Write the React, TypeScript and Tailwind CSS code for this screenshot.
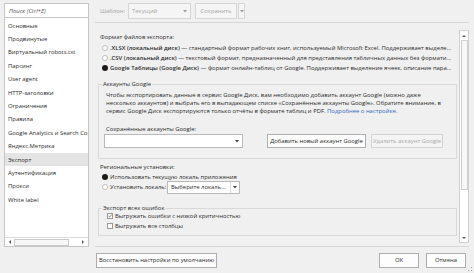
import React from 'react';

const sections = [
  'Основные',
  'Продвинутые',
  'Виртуальный robots.txt',
  'Парсинг',
  'User agent',
  'HTTP-заголовки',
  'Ограничения',
  'Правила',
  'Google Analytics и Search Console',
  'Яндекс.Метрика',
  'Экспорт',
  'Аутентификация',
  'Прокси',
  'White label',
];

function Radio({ checked }: { checked?: boolean }) {
  if (checked) {
    return <span className="w-[6px] h-[6px] rounded-full bg-[#1c1c1c] shrink-0" />;
  }
  return <span className="w-[6px] h-[6px] rounded-full border border-[#bdbdbd] bg-white shrink-0" />;
}

function Checkbox({ checked }: { checked?: boolean }) {
  return (
    <span className="w-[6px] h-[6px] border border-[#9a9a9a] bg-white shrink-0 flex items-center justify-center">
      {checked && (
        <svg width="6" height="6" viewBox="0 0 6 6" className="-mt-[1px]">
          <path d="M0.8 3.2 L2.3 4.6 L5.4 0.9" fill="none" stroke="#222" strokeWidth="0.9" />
        </svg>
      )}
    </span>
  );
}

function Caret({ color = '#444' }: { color?: string }) {
  return (
    <svg width="4" height="3" viewBox="0 0 4 3">
      <path d="M0 0 L4 0 L2 2.5 Z" fill={color} />
    </svg>
  );
}

function Arrow({ dir }: { dir: 'left' | 'right' | 'up' | 'down' }) {
  const d = {
    left: 'M3 0 L3 4 L1 2 Z',
    right: 'M1 0 L1 4 L3 2 Z',
    up: 'M0 3 L4 3 L2 1 Z',
    down: 'M0 1 L4 1 L2 3 Z',
  }[dir];
  return (
    <svg width="4" height="4" viewBox="0 0 4 4">
      <path d={d} fill="#555" />
    </svg>
  );
}

export default function App() {
  return (
    <div className="relative w-[474px] h-[273px] overflow-hidden bg-[#f0f0f0] text-[#2b2b2b] font-['Open_Sans',sans-serif] text-[5.9px] leading-[8px] flex flex-col">
      <div className="flex h-[247px]">
        {/* Sidebar */}
        <aside className="w-[95px] shrink-0 pl-[4px] pr-[6px] pt-[3px] flex flex-col">
          <div className="h-[15px] border border-[#c6c6c6] bg-white flex items-center pl-[4px] italic text-[#555]">
            Поиск (Ctrl+E)
          </div>
          <div className="h-[229px] border border-t-0 border-[#c6c6c6] bg-white flex flex-col">
            <div className="flex-1 overflow-hidden pt-[1px]">
              {sections.map((s) => (
                <div
                  key={s}
                  className={`h-[13.4px] flex items-center pl-[3px] whitespace-nowrap overflow-hidden ${s === 'Экспорт' ? 'bg-[#e4e4e4]' : ''}`}
                >
                  {s}
                </div>
              ))}
            </div>
            <div className="h-[9px] border-t border-[#dcdcdc] flex items-center px-[1px]">
              <div className="w-[8px] h-[8px] flex items-center justify-center"><Arrow dir="left" /></div>
              <div className="w-[55px] h-[7px] border border-[#c9c9c9] bg-[#f7f7f7]" />
              <div className="flex-1" />
              <div className="w-[8px] h-[8px] flex items-center justify-center"><Arrow dir="right" /></div>
            </div>
          </div>
        </aside>

        {/* Main */}
        <main className="flex-1 pr-[5px] flex flex-col">
          <div className="h-[22px] pt-[3px] flex items-start">
            <div className="h-[16px] flex items-center ml-[5px] text-[#a5a5a5]">Шаблон:</div>
            <div className="ml-[3px] w-[63px] h-[16px] border border-[#d6d6d6] bg-[#f5f5f5] flex items-center pl-[3px] pr-[3px] text-[#a5a5a5]">
              <span className="flex-1">Текущий</span>
              <Caret color="#9a9a9a" />
            </div>
            <div className="ml-[4px] w-[42px] h-[16px] border border-[#d6d6d6] bg-[#f5f5f5] flex items-center justify-center text-[#a5a5a5]">
              Сохранить
            </div>
            <div className="ml-[1px] w-[7px] h-[16px] border border-[#d6d6d6] bg-[#f5f5f5] flex items-center justify-center">
              <Caret color="#9a9a9a" />
            </div>
          </div>
          <div className="h-px bg-[#d6d6d6]" />

          <div className="h-[220px] flex">
            <div className="w-[363px] overflow-hidden flex flex-col">
              <div className="mt-[10px] pl-[5px]">Формат файлов экспорта:</div>
              <div className="mt-[2px] pl-[7px] pr-[5px]">
                {[
                  ['.XLSX (локальный диск)', ' — стандартный формат рабочих книг, используемый Microsoft Excel. Поддерживает выделение ячеек и форматирование', false],
                  ['.CSV (локальный диск)', ' — текстовый формат, предназначенный для представления табличных данных без форматирования', false],
                  ['Google Таблицы (Google Диск)', ' — формат онлайн-таблиц от Google. Поддерживает выделение ячеек, описание параметров', true],
                ].map(([b, rest, c]) => (
                  <div key={b as string} className="h-[10px] flex items-center gap-[2px]">
                    <Radio checked={c as boolean} />
                    <span className="whitespace-nowrap overflow-hidden text-ellipsis">
                      <b className="font-semibold">{b as string}</b>
                      {rest as string}
                    </span>
                  </div>
                ))}
              </div>

              <fieldset className="mt-[7px] ml-[3px] mr-[1px] border border-[#d9d9d9] pl-[7px] pr-[4px] pb-[10px]">
                <legend className="-ml-[4px] px-[1px]">Аккаунты Google</legend>
                <div className="mt-[3px] whitespace-nowrap">
                  <div>Чтобы экспортировать данные в сервис Google Диск, вам необходимо добавить аккаунт Google (можно даже</div>
                  <div>несколько аккаунтов) и выбрать его в выпадающем списке «Сохранённые аккаунты Google». Обратите внимание, в</div>
                  <div>
                    сервис Google Диск экспортируются только отчёты в формате таблиц и PDF.{' '}
                    <span className="text-[#2f68c4]">Подробнее о настройке.</span>
                  </div>
                </div>
                <div className="mt-[10px]">Сохранённые аккаунты Google:</div>
                <div className="mt-[1px] h-[14px] flex">
                  <div className="-ml-[2px] w-[139px] border border-[#b9b9b9] bg-white flex items-center justify-end pr-[3px]">
                    <Caret />
                  </div>
                  <div className="ml-[24px] w-[99px] border border-[#adadad] bg-[#fdfdfd] flex items-center justify-center whitespace-nowrap">
                    Добавить новый аккаунт Google
                  </div>
                  <div className="ml-[5px] w-[72px] border border-[#d3d3d3] bg-[#f4f4f4] flex items-center justify-center whitespace-nowrap text-[#a8a8a8]">
                    Удалить аккаунт Google
                  </div>
                </div>
              </fieldset>

              <div className="mt-[4px] pl-[5px]">Региональные установки:</div>
              <div className="mt-[1px] pl-[7px]">
                <div className="h-[10px] flex items-center gap-[2px]">
                  <Radio checked />
                  <span>Использовать текущую локаль приложения</span>
                </div>
                <div className="h-[10px] flex items-center gap-[2px]">
                  <Radio />
                  <span className="w-[55px] whitespace-nowrap">Установить локаль:</span>
                  <div className="w-[73px] h-[13px] shrink-0 border border-[#b9b9b9] bg-white flex items-center pl-[3px]">
                    <span className="flex-1 whitespace-nowrap">Выберите локаль...</span>
                    <span className="w-[9px] h-full border-l border-[#dadada] flex items-center justify-center">
                      <Caret />
                    </span>
                  </div>
                </div>
              </div>

              <fieldset className="mt-[12px] ml-[3px] mr-[1px] border border-[#d9d9d9] pl-[8px] pb-[4px]">
                <legend className="-ml-[5px] px-[1px]">Экспорт всех ошибок</legend>
                <div className="-mt-[1px] h-[10px] flex items-center gap-[2px]">
                  <Checkbox checked />
                  <span>Выгружать ошибки с низкой критичностью</span>
                </div>
                <div className="h-[10px] flex items-center gap-[2px]">
                  <Checkbox />
                  <span>Выгружать все столбцы</span>
                </div>
              </fieldset>
            </div>

            {/* vertical scrollbar */}
            <div className="ml-[1px] mt-[7px] w-[10px] h-[213px] border border-[#d0d0d0] bg-white flex flex-col items-center">
              <div className="h-[9px] flex items-center justify-center"><Arrow dir="up" /></div>
              <div className="w-[7px] h-[150px] border border-[#cfcfcf] bg-[#f7f7f7]" />
              <div className="flex-1" />
              <div className="h-[9px] flex items-center justify-center"><Arrow dir="down" /></div>
            </div>
          </div>
          <div className="mt-[3px] h-px bg-[#d6d6d6]" />
        </main>
      </div>

      {/* Bottom buttons */}
      <div className="flex-1 flex items-center">
        <div className="ml-[96px] w-[121px] h-[15px] border border-[#adadad] bg-[#fdfdfd] flex items-center justify-center whitespace-nowrap">
          Восстановить настройки по умолчанию
        </div>
        <div className="flex-1" />
        <div className="w-[40px] h-[15px] border border-[#adadad] bg-[#fdfdfd] flex items-center justify-center">OK</div>
        <div className="ml-[7px] mr-[8px] w-[40px] h-[15px] border border-[#adadad] bg-[#fdfdfd] flex items-center justify-center">Отмена</div>
      </div>

      <svg className="absolute right-[1px] bottom-[1px]" width="5" height="5" viewBox="0 0 5 5">
        <rect x="3" y="0" width="1" height="1" fill="#a0a0a0" />
        <rect x="3" y="3" width="1" height="1" fill="#a0a0a0" />
        <rect x="0" y="3" width="1" height="1" fill="#a0a0a0" />
      </svg>
    </div>
  );
}
